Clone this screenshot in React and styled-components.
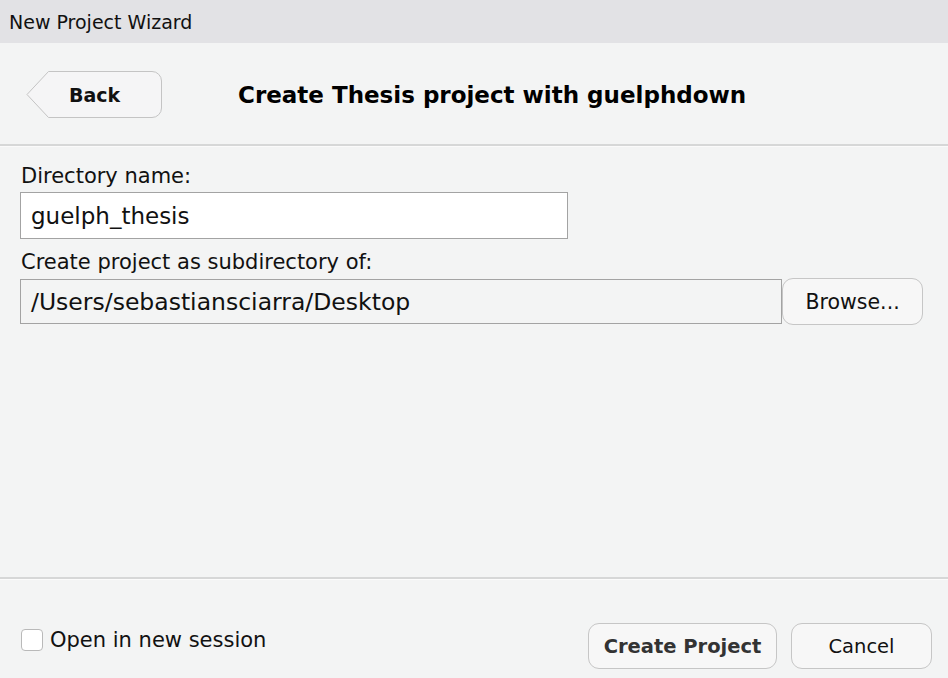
import React from 'react'
import styled, { createGlobalStyle } from 'styled-components'

const Global = createGlobalStyle`
  html, body {
    margin: 0;
    padding: 0;
    background: #f3f4f4;
  }
  body {
    font-family: "DejaVu Sans", "Liberation Sans", sans-serif;
    color: #000;
  }
`;

const Window = styled.div`
  width: 948px;
  height: 678px;
  display: flex;
  flex-direction: column;
  background: #f3f4f4;
  overflow: hidden;
`;

const TitleBar = styled.div`
  height: 43px;
  flex: none;
  background: #e2e2e5;
  display: flex;
  align-items: center;
  padding-left: 9px;
  font-size: 19px;
  color: #111;
`;

const Header = styled.div`
  height: 103px;
  flex: none;
  display: flex;
  align-items: center;
  padding-left: 26px;
  padding-top: 3px;
  box-sizing: border-box;
  border-bottom: 2px solid #d6d7d7;
  box-shadow: 0 1px 0 #fafafa;
`;

const BackButton = styled.button`
  position: relative;
  width: 137px;
  height: 48px;
  border: none;
  background: none;
  padding: 0 0 0 43px;
  text-align: left;
  font-family: inherit;
  font-size: 19px;
  font-weight: bold;
  color: #111;
  cursor: pointer;

  svg {
    position: absolute;
    left: 0;
    top: 0;
  }

  span {
    position: relative;
  }
`;

const Heading = styled.h1`
  margin: 0 0 0 75px;
  font-size: 23px;
  font-weight: bold;
`;

const Body = styled.div`
  flex: 1;
  padding: 18px 25px 0 20px;
  display: flex;
  flex-direction: column;
  border-bottom: 2px solid #d6d7d7;
`;

const Label = styled.label`
  font-size: 21px;
  padding-left: 1px;
  margin-bottom: 4px;
  color: #111;
`;

const Row = styled.div`
  display: flex;
  align-items: center;
`;

const Field = styled.div`
  box-sizing: border-box;
  width: ${p => p.$width}px;
  height: ${p => p.$height}px;
  border: 1px solid #a3a3a3;
  background: ${p => (p.$readonly ? '#f3f4f4' : '#fff')};
  display: flex;
  align-items: center;
  padding-left: 10px;
  font-size: ${p => (p.$readonly ? 23.5 : 23)}px;
  color: #111;
  margin-bottom: ${p => p.$gap || 0}px;
`;

const Button = styled.button`
  box-sizing: border-box;
  width: ${p => p.$width}px;
  height: ${p => p.$height || 46}px;
  border: 1px solid #c6c6c6;
  border-radius: 11px;
  background: #f7f7f7;
  font-family: inherit;
  font-size: ${p => p.$size || 19.5}px;
  font-weight: ${p => (p.$bold ? 'bold' : 'normal')};
  color: ${p => (p.$bold ? '#333' : '#111')};
  cursor: pointer;
  padding: 0;
`;

const Footer = styled.div`
  height: 99px;
  flex: none;
  display: flex;
  align-items: center;
  padding: 0 16px 0 21px;
  box-sizing: border-box;
  border-top: 1px solid #fbfbfb;
`;

const Check = styled.label`
  display: flex;
  align-items: center;
  gap: 7px;
  font-size: 21px;
  color: #111;
  margin-top: 22px;
`;

const Box = styled.span`
  width: 20px;
  height: 20px;
  border: 1px solid #b9b9b9;
  border-radius: 4px;
  background: #fff;
`;

const Actions = styled.div`
  margin-left: auto;
  display: flex;
  gap: 14px;
  margin-top: 34px;
`;

export default function App() {
  return (
    <Window>
      <Global />
      <TitleBar>New Project Wizard</TitleBar>
      <Header>
        <BackButton>
          <svg width="137" height="48" viewBox="0 0 137 48">
            <path
              d="M22.5 0.5 H126 A9.5 9.5 0 0 1 135.5 10 V37 A9.5 9.5 0 0 1 126 46.5 H22.5 L1 23.5 Z"
              fill="#f5f5f6"
              stroke="#c4c4c4"
              strokeWidth="1"
            />
          </svg>
          <span>Back</span>
        </BackButton>
        <Heading>Create Thesis project with guelphdown</Heading>
      </Header>
      <Body>
        <Label>Directory name:</Label>
        <Field $width={548} $height={47} $gap={11}>guelph_thesis</Field>
        <Label>Create project as subdirectory of:</Label>
        <Row>
          <Field $width={763} $height={45} $readonly>/Users/sebastiansciarra/Desktop</Field>
          <Button $width={141} $height={47} $size={20.5}>Browse...</Button>
        </Row>
      </Body>
      <Footer>
        <Check>
          <Box />
          Open in new session
        </Check>
        <Actions>
          <Button $width={189} $bold>Create Project</Button>
          <Button $width={141}>Cancel</Button>
        </Actions>
      </Footer>
    </Window>
  )
}
